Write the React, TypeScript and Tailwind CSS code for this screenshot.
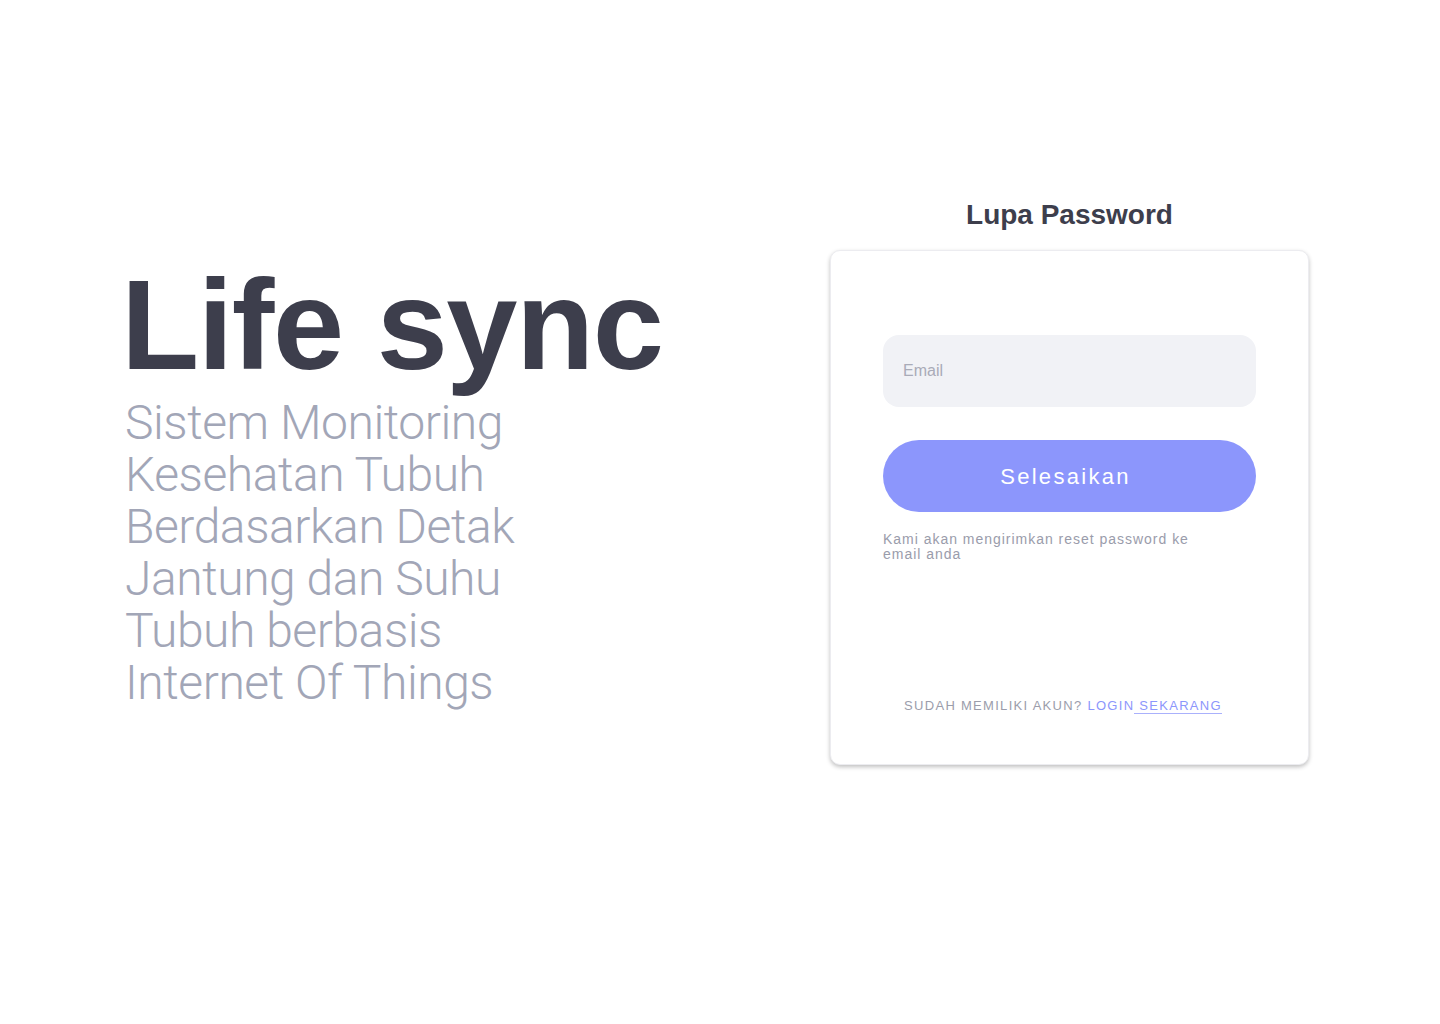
export default function App() {
  return (
    <div className="w-full h-[1024px] bg-white flex font-['Liberation_Sans',Arial,sans-serif]">
      <div className="w-[830px] shrink-0 pl-[122px] pt-[261px]">
        <h1 className="-ml-[1px] text-[128px] leading-none font-bold tracking-[-1.5px] text-[#3d3e4c]">
          Life sync
        </h1>
        <p className="mt-[8px] ml-[3px] w-[420px] text-[48px] leading-[52px] font-light tracking-[-0.45px] text-[#a2a6b7] font-['Roboto',sans-serif]">
          Sistem Monitoring Kesehatan Tubuh Berdasarkan Detak Jantung dan Suhu Tubuh berbasis Internet Of Things
        </p>
      </div>

      <div className="w-[479px] shrink-0 pt-[201px] flex flex-col items-center">
        <h2 className="text-[28px] leading-none font-bold text-[#3d3e4c]">Lupa Password</h2>

        <div className="mt-[21px] w-[479px] h-[515px] bg-white rounded-[10px] border border-[#ececf0] shadow-[0_2px_4px_rgba(0,0,0,0.25)] px-[52px] pt-[84px] pb-[50px] flex flex-col">
          <input
            type="email"
            placeholder="Email"
            className="w-full h-[72px] rounded-[16px] bg-[#f1f2f6] px-[20px] text-[16px] text-[#3d3e4c] placeholder:text-[#a9abb8] outline-none"
          />

          <button className="mt-[33px] w-full h-[72px] rounded-full bg-[#8c96fc] text-white text-[22px] tracking-[2.3px] pr-[8px]">
            Selesaikan
          </button>

          <p className="mt-[20px] w-[314px] text-[14px] leading-[15px] tracking-[0.98px] text-[#9a9cab]">
            Kami akan mengirimkan reset password ke email anda
          </p>

          <p className="mt-auto text-center text-[13px] leading-[16px] tracking-[1.3px] text-[#9b9dab] pr-[13px]">
            SUDAH MEMILIKI AKUN? <span className="text-[#8c96fc]">LOGIN</span>
            <span className="text-[#8c96fc] border-b border-[#aab1fc]"> SEKARANG</span>
          </p>
        </div>
      </div>
    </div>
  );
}
